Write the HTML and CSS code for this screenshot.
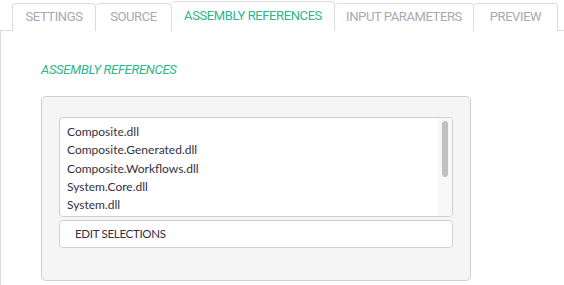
FILE: index.html
```html
<!DOCTYPE html>
<html>
<head>
<meta charset="utf-8">
<link rel="stylesheet" href="styles.css">
</head>
<body>
<div class="tabs">
  <div class="tab">SETTINGS</div>
  <div class="tab">SOURCE</div>
  <div class="tab active">ASSEMBLY REFERENCES</div>
  <div class="tab">INPUT PARAMETERS</div>
  <div class="tab">PREVIEW</div>
</div>
<div class="content">
  <h2 class="heading">ASSEMBLY REFERENCES</h2>
  <div class="panel">
    <div class="list">
      <div class="items">
        <div class="item">Composite.dll</div>
        <div class="item">Composite.Generated.dll</div>
        <div class="item">Composite.Workflows.dll</div>
        <div class="item">System.Core.dll</div>
        <div class="item">System.dll</div>
      </div>
      <div class="scroll"><div class="thumb"></div></div>
    </div>
    <div class="button">EDIT SELECTIONS</div>
  </div>
</div>
</body>
</html>
```

FILE: styles.css
```css
html, body {
  margin: 0;
  padding: 0;
  background: #fff;
  width: 564px;
  height: 285px;
  overflow: hidden;
}
.tabs {
  display: flex;
  align-items: flex-end;
  height: 30px;
  padding-left: 12px;
  border-bottom: 1px solid #dcdcdc;
}
.tab {
  box-sizing: border-box;
  height: 28px;
  margin-bottom: -1px;
  border: 1px solid #dcdcdc;
  border-bottom: none;
  border-left: none;
  border-radius: 4px 4px 0 0;
  background: #fff;
  font-family: Roboto, "Liberation Sans", sans-serif;
  font-size: 13px;
  letter-spacing: -0.4px;
  color: #a9a9b0;
  display: flex;
  align-items: center;
  justify-content: center;
  padding: 0 0 3px;
  white-space: nowrap;
}
.tab:first-child {
  border-left: 1px solid #dcdcdc;
}
.tab:nth-child(1) { width: 84px; }
.tab:nth-child(2) { width: 76px; }
.tab:nth-child(3) { width: 163px; }
.tab:nth-child(4) { width: 139px; }
.tab:nth-child(5) { width: 84px; }
.tab.active {
  height: 30px;
  padding-bottom: 1px;
  color: #2eb58a;
  border-bottom: 1px solid #fff;
}
.content {
  border-left: 1px solid #dcdcdc;
  height: 254px;
  padding: 31px 0 0 40px;
  box-sizing: border-box;
}
.heading {
  margin: 0;
  font-family: Roboto, "Liberation Sans", sans-serif;
  font-style: italic;
  font-weight: normal;
  font-size: 13px;
  color: #2eb58a;
  line-height: 16px;
  letter-spacing: -0.3px;
}
.panel {
  margin-top: 18px;
  width: 430px;
  height: 185px;
  box-sizing: border-box;
  background: #f5f5f5;
  border: 1px solid #cfcfcf;
  border-radius: 5px;
  padding: 20px 17px 0;
}
.list {
  box-sizing: border-box;
  height: 100px;
  background: #fff;
  border: 1px solid #cfcfcf;
  border-radius: 4px;
  display: flex;
  overflow: hidden;
}
.items {
  flex: 1;
  padding: 5px 0 0 7px;
}
.item {
  font-family: Lato, "Noto Sans", sans-serif;
  font-size: 12px;
  line-height: 18.3px;
  color: #35303f;
}
.scroll {
  width: 14px;
  background: #f8f8f8;
  padding: 3px 4px;
  box-sizing: border-box;
}
.thumb {
  width: 6px;
  height: 56px;
  background: #c1c1c1;
  border-radius: 3px;
}
.button {
  margin-top: 3px;
  box-sizing: border-box;
  height: 28px;
  background: #fff;
  border: 1px solid #cfcfcf;
  border-radius: 4px;
  font-family: Lato, "Noto Sans", sans-serif;
  font-size: 11.5px;
  letter-spacing: -0.3px;
  color: #35303f;
  display: flex;
  align-items: center;
  padding: 0 0 1px 15px;
}
```
